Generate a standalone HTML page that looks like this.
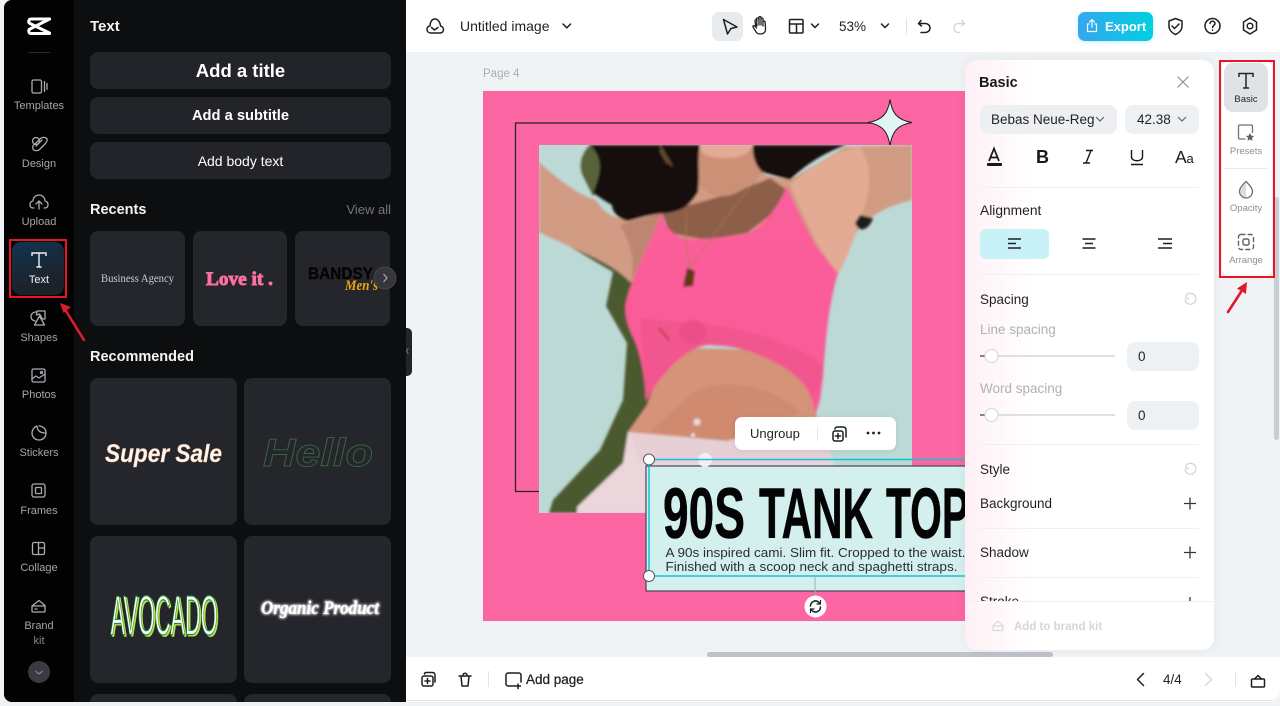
<!DOCTYPE html>
<html><head><meta charset="utf-8"><title>Untitled image</title>
<style>
*{box-sizing:border-box}
html,body{margin:0;padding:0;width:1280px;height:706px;overflow:hidden;background:#f1f2f3;font-family:"Liberation Sans",sans-serif}
.a{position:absolute;white-space:nowrap}
.c{text-align:center}
#app{position:absolute;left:0;top:0;width:1280px;height:706px;overflow:hidden;filter:blur(.3px)}
svg{position:absolute;left:0;top:0;overflow:visible}
.lab{left:4px;width:70px;text-align:center;font-size:11px;color:#a4a6aa;line-height:14px;position:absolute;white-space:nowrap}
.btn{position:absolute;left:90px;width:301px;height:37px;background:#232429;border-radius:8px;color:#fff;text-align:center;line-height:38px}
.card{position:absolute;background:#25262b;border-radius:8px}
.h{font-weight:bold;color:#f4f4f4;font-size:14.5px;position:absolute;white-space:nowrap}
.t{position:absolute;white-space:nowrap;font-size:13.5px;color:#1f2126;line-height:18px}
.dv{position:absolute;left:980px;width:219px;height:1px;background:#eff0f2}
.inp{position:absolute;left:1127px;width:72px;height:29px;background:#eef1f3;border-radius:8px;font-size:13.5px;line-height:29px;padding-left:11px;color:#22242a}
.sl{fill:none;stroke:#1d1f24;stroke-width:1.5;stroke-linecap:round;stroke-linejoin:round}
.ic{fill:none;stroke:#a9abb0;stroke-width:1.3;stroke-linecap:round;stroke-linejoin:round}
</style></head><body><div id="app">

<!-- white main -->
<div class="a" style="left:400px;top:0;width:880px;height:702px;background:#fff;border-radius:0 0 10px 0"></div>
<div class="a" style="left:406px;top:52px;width:874px;height:605px;background:#f0f3f5"></div>

<!-- left rail + panel -->
<div class="a" style="left:4px;top:0;width:402px;height:702px;background:#0d0e10;border-radius:8px 0 0 8px"></div>
<div class="a" style="left:4px;top:0;width:70px;height:702px;background:#020203;border-radius:8px 0 0 8px"></div>
<div class="a" style="left:406px;top:328px;width:6px;height:48px;background:#222428;border-radius:0 5px 5px 0"></div>
<div class="a" style="left:12px;top:242px;width:52px;height:53px;background:linear-gradient(160deg,#123452,#1c2229 75%);border-radius:9px"></div>

<div class="lab" style="top:99px">Templates</div>
<div class="lab" style="top:157px">Design</div>
<div class="lab" style="top:215px">Upload</div>
<div class="lab" style="top:273px;color:#f1f1f1">Text</div>
<div class="lab" style="top:331px">Shapes</div>
<div class="lab" style="top:388px">Photos</div>
<div class="lab" style="top:446px">Stickers</div>
<div class="lab" style="top:504px">Frames</div>
<div class="lab" style="top:561px">Collage</div>
<div class="lab" style="top:619px">Brand</div>
<div class="lab" style="top:634px;color:#85878b">kit</div>

<svg width="1280" height="706" style="z-index:2">
  <!-- logo -->
  <g fill="none" stroke="#fff" stroke-width="3" stroke-linejoin="round" stroke-linecap="round"><path d="M49.500 19H31c-2.500 0-3 3.500-1 4.500L49.500 33"/><path d="M49.500 33.500H31c-2.500 0-3-3.500-1-4.500L49.500 19"/></g>
  <rect x="28" y="52" width="22" height="1" fill="#2b2c30"/>
  <!-- templates -->
  <g class="ic"><rect x="32" y="80" width="9.500" height="13" rx="1.500"/><path d="M44.500 81.500v10M47 83.500v6"/></g>
  <!-- design -->
  <g class="ic"><circle cx="36" cy="141" r="3.500"/><path d="M40 139c2-2 4-2 6-1s1 4-1 6l-6 6c-2 1-5 1-6-1s0-4 2-5z"/><path d="M36 146l6-6"/></g>
  <!-- upload -->
  <g class="ic"><path d="M34 208h-1c-2.500 0-3-2-3-3.500s1-3.500 3-3.500c0-3.500 3-6 6-6s6 2.500 6 6c2 0 3 2 3 3.500s-.5 3.500-3 3.500h-1"/><path d="M39 209v-7M36 204l3-3 3 3"/></g>
  <!-- T active -->
  <g fill="none" stroke="#eef1f4" stroke-width="1.400"><path d="M32 256v-3h14v3M39 253v14M36.500 267h5"/></g>
  <!-- shapes -->
  <g class="ic"><path d="M36 312c-3 0-5 2-5 4.500s2 4 4 4.500"/><path d="M37 311h8v8h-2.500l-3-5-3 1z"/><path d="M39.500 316l5 9h-10z"/></g>
  <!-- photos -->
  <g class="ic"><rect x="32" y="369" width="13" height="13" rx="1.500"/><path d="M32 379l4-3 3 2 6-4"/><circle cx="41.500" cy="372.500" r="1"/></g>
  <!-- stickers -->
  <g class="ic"><path d="M39 426c4 0 7 3 7 7s-3 7-7 7-7-3-7-7c0-3 2-6 5-7 0 4 3 7 8 7"/></g>
  <!-- frames -->
  <g class="ic"><rect x="32" y="484" width="13" height="13" rx="2"/><rect x="35.500" y="487.500" width="6" height="6" rx="1"/></g>
  <!-- collage -->
  <g class="ic"><rect x="32.500" y="542.500" width="12" height="12" rx="1.500"/><path d="M38.500 542.500v12M38.500 548h6"/></g>
  <!-- brand -->
  <g class="ic"><path d="M32 606l7-5.500 6 5M32 606h13v5a1 1 0 0 1-1 1H33a1 1 0 0 1-1-1zM35 609h2"/></g>
  <circle cx="39" cy="672" r="11" fill="#3a3b42"/><path d="M35.500 671l3.500 3 3.500-3" fill="none" stroke="#84868c" stroke-width="1.200"/>
  <path d="M408.500 348l-2 3 2 3" fill="none" stroke="#777" stroke-width="1"/>
</svg>

<div class="h" style="left:90px;top:18px;font-size:15px">Text</div>
<div class="btn" style="top:52px;font-size:18.500px;font-weight:bold">Add a title</div>
<div class="btn" style="top:97px;font-size:14.700px;font-weight:bold">Add a subtitle</div>
<div class="btn" style="top:142px;font-size:14px">Add body text</div>
<div class="h" style="left:90px;top:202px">Recents</div>
<div class="a" style="right:889px;top:202px;font-size:13px;color:#74767b">View all</div>
<div class="card" style="left:90px;top:231px;width:95px;height:95px"></div>
<div class="card" style="left:193px;top:231px;width:94px;height:95px"></div>
<div class="card" style="left:295px;top:231px;width:95px;height:95px"></div>
<div class="h" style="left:90px;top:349px">Recommended</div>
<div class="card" style="left:90px;top:378px;width:147px;height:147px"></div>
<div class="card" style="left:244px;top:378px;width:147px;height:147px"></div>
<div class="card" style="left:90px;top:536px;width:147px;height:147px"></div>
<div class="card" style="left:244px;top:536px;width:147px;height:147px"></div>
<div class="card" style="left:90px;top:694px;width:147px;height:8px;border-radius:8px 8px 0 0"></div>
<div class="card" style="left:244px;top:694px;width:147px;height:8px;border-radius:8px 8px 0 0"></div>

<svg width="1280" height="706" style="z-index:2">
  <defs><filter id="gl" x="-20%" y="-50%" width="140%" height="200%"><feGaussianBlur stdDeviation="1.300"/></filter></defs>
  <text x="101" y="282" font-family="Liberation Serif" font-size="11.500" fill="#c9ccd3" textLength="73" lengthAdjust="spacingAndGlyphs">Business Agency</text>
  <text x="206" y="285" font-family="Liberation Serif" font-weight="bold" font-size="19" fill="#ff6f9f" stroke="#ff6f9f" stroke-width=".9" textLength="67" lengthAdjust="spacingAndGlyphs">Love it .</text>
  <text x="308" y="279" font-size="17" font-weight="bold" fill="#050505" stroke="#050505" stroke-width=".4" textLength="65" lengthAdjust="spacingAndGlyphs">BANDSY</text>
  <text x="345" y="290" font-family="Liberation Serif" font-style="italic" font-weight="bold" font-size="15" fill="#eda70c" textLength="33" lengthAdjust="spacingAndGlyphs">Men's</text>
  <circle cx="385" cy="278" r="11" fill="#35363b" stroke="#45464b"/><path d="M383.500 274l3.500 4-3.500 4" fill="none" stroke="#a7a8ac" stroke-width="1.200"/>

  <text x="105" y="462" font-weight="bold" font-style="italic" font-size="25" fill="#fff6ec" stroke="#e9b79b" stroke-width=".4" textLength="117" lengthAdjust="spacingAndGlyphs">Super Sale</text>
  <text x="263" y="466" font-weight="bold" font-style="italic" font-size="39" fill="none" stroke="#3a6340" stroke-width=".9" textLength="110" lengthAdjust="spacingAndGlyphs">Hello</text>
  <text x="112" y="636" font-size="56" fill="#b9e14a" stroke="#b9e14a" stroke-width="1" textLength="107" lengthAdjust="spacingAndGlyphs">AVOCADO</text>
  <text x="110.500" y="634.500" font-size="56" fill="#fff" stroke="#188a35" stroke-width="1.200" textLength="107" lengthAdjust="spacingAndGlyphs">AVOCADO</text>
  <text x="261" y="614" font-family="Liberation Serif" font-style="italic" font-weight="bold" font-size="18.500" fill="#fff" filter="url(#gl)" stroke="#fff" stroke-width="1.200" textLength="118" lengthAdjust="spacingAndGlyphs">Organic Product</text>
  <text x="261" y="614" font-family="Liberation Serif" font-style="italic" font-weight="bold" font-size="18.500" fill="#fff" textLength="118" lengthAdjust="spacingAndGlyphs">Organic Product</text>
</svg>

<!-- canvas -->
<div class="a" style="left:483px;top:68px;font-size:11.500px;color:#a8aeb5">Page 4</div>
<svg width="1280" height="706" viewBox="0 0 1280 706">
  <defs>
    <clipPath id="ph"><rect x="539" y="145" width="373" height="368"/></clipPath>
    <filter id="b1" x="-5%" y="-5%" width="110%" height="110%"><feGaussianBlur stdDeviation="1.200"/></filter>
    <linearGradient id="tp" x1="0" y1="0" x2="0" y2="1"><stop offset="0" stop-color="#fb5f9b"/><stop offset="1" stop-color="#f85a96"/></linearGradient>
  </defs>
  <rect x="483" y="91" width="482" height="530" fill="#fb66a3"/>
  <path d="M515.500 491.500V123H880" fill="none" stroke="#23222a" stroke-width="1.300"/>
  <path d="M515 491.500H545" fill="none" stroke="#23222a" stroke-width="1.300"/>
  <path d="M890 99.500C892 113 897 120 912 122.500 897 125 892 132 890 146 888 132 883 125 868 122.500 883 120 888 113 890 99.500Z" fill="#dff6f2" stroke="#1a1c20" stroke-width="1"/>
  <g clip-path="url(#ph)">
    <rect x="539" y="145" width="373" height="368" fill="#bcd9d6"/>
    <g filter="url(#b1)">
      <!-- green shadow -->
      <path d="M539 228L613 272 606 306 627 343 623 400 600 450 553 500 549 513H640L670 430 670 300 640 260 570 215Z" fill="#4b5a2e"/>
      <path d="M590 145C580 155 578 168 584 178L593 196 610 180 620 145Z" fill="#59623a"/>
      <!-- pants -->
      <path d="M628 432L623 463 577 507V513H680V466H835L825 440 790 428 727 441Z" fill="#ead6db"/>
      <path d="M628 432L727 441 790 428 828 445 833 462H640Z" fill="#e6d0d6"/>
      <!-- left arm + shoulders + neck + right arm skin -->
      <path d="M539 162C556 178 578 195 596 200 605 215 620 225 650 215L680 210 697 190 697 145H755L765 175 790 180 845 147 912 145V200C880 208 862 220 852 240L838 275 700 320 650 280 630 282C612 262 575 250 539 232Z" fill="#d19b84"/>
      <path d="M790 185C810 168 830 152 860 147 872 165 872 185 862 215 852 245 846 260 838 275L815 240Z" fill="#e3ab93"/>
      <path d="M620 225C632 245 636 265 630 282 640 265 650 240 662 213Z" fill="#bd8670"/>
      <path d="M662 213C680 206 720 200 770 178L787 190 773 213 747 233 707 240 670 233Z" fill="#8d5e49"/>
      <path d="M697 180C710 205 740 200 762 172L755 145H697Z" fill="#cc9076"/>
      <path d="M697 145H753C748 155 740 158 725 158S702 155 697 145Z" fill="#e3ab97"/>
      <!-- hair -->
      <path d="M590 145H700C697 160 700 175 698 192 690 205 684 210 668 213 650 214 640 218 628 221 620 220 612 212 612 205 603 200 598 196 593 193 600 175 605 160 590 145Z" fill="#150e0f"/>
      <path d="M753 145H847C830 150 808 162 790 180L762 172C755 165 752 155 753 145Z" fill="#160f10"/>
      <path d="M855 223C860 235 870 228 873 218L860 215Z" fill="#1e1a1b"/>
      <!-- belly -->
      <path d="M647 405C655 380 668 358 690 348L760 350 812 385 817 418 727 441 628 432 640 415Z" fill="#d59379"/>
      <path d="M690 395C720 375 770 385 800 412L727 441 650 432Z" fill="#cf8a70"/>
      <!-- top -->
      <path d="M662 213C664 225 670 232 680 237 695 241 720 238 745 234 762 228 778 208 787 186 795 205 805 225 813 240 822 255 832 265 838 273 830 300 826 330 823 377L820 400 815 415 812 400C806 380 785 366 763 357 745 348 725 345 707 345 685 348 660 375 646 401 645 375 640 350 632 335 625 320 624 308 627 298 635 270 650 240 662 213Z" fill="url(#tp)"/>
      <path d="M640 318C680 322 730 325 760 335 790 345 810 355 823 365L822 380 812 400C806 380 785 366 763 357 745 348 725 345 707 345 685 348 660 375 646 401 645 375 642 340 640 318Z" fill="#f2568e"/>
      <ellipse cx="693" cy="332" rx="14" ry="12" fill="#ec4f88"/>
      <path d="M659 328l10 12" stroke="#b93a3a" stroke-width="2" fill="none"/>
      <!-- necklace -->
      <path d="M686 210C686 235 686 250 690 268M756 180C735 205 710 240 690 268" stroke="#a37a3c" stroke-width=".8" fill="none"/>
      <path d="M687 268l8 3-2 15-10 1z" fill="#5e3a10"/>
      <circle cx="697" cy="422" r="3.500" fill="#e7dedc"/><circle cx="693" cy="435" r="1.800" fill="#eee"/>
      <path d="M660 150l8 14M660 146l12 20" stroke="#a88149" stroke-width="1.300" opacity=".7"/>
    </g>
  </g>

  <!-- text box -->
  <rect x="646" y="466" width="330" height="125" fill="#d4f0ee" stroke="#45474b" stroke-width="1.200"/>
  <g font-size="71" font-weight="bold" fill="#040404" stroke="#040404" stroke-width=".6">
    <text x="663" y="538" textLength="82" lengthAdjust="spacingAndGlyphs">90S</text>
    <text x="759" y="538" textLength="114" lengthAdjust="spacingAndGlyphs">TANK</text>
    <text x="886" y="538" textLength="83" lengthAdjust="spacingAndGlyphs">TOP</text>
  </g>
  <text x="665.500" y="557" font-size="13" fill="#2a2d30" textLength="300" lengthAdjust="spacingAndGlyphs">A 90s inspired cami. Slim fit. Cropped to the waist.</text>
  <text x="665.500" y="571" font-size="13" fill="#2a2d30" textLength="292" lengthAdjust="spacingAndGlyphs">Finished with a scoop neck and spaghetti straps.</text>
  <circle cx="705" cy="460" r="7" fill="#f5eef0"/>
  <path d="M649 459.500H966M649 576H966M649 459V576" fill="none" stroke="#10c4da" stroke-width="1.500"/>
  <path d="M815 577V596" stroke="#9eb0b2" stroke-width="1"/>
  <circle cx="649" cy="459.500" r="5.500" fill="#fff" stroke="#55585c"/>
  <circle cx="649" cy="576" r="5.500" fill="#fff" stroke="#55585c"/>
  <circle cx="815.500" cy="606.500" r="11" fill="#fff"/>
  <g fill="none" stroke="#1d1f24" stroke-width="1.500" stroke-linecap="round" stroke-linejoin="round"><path d="M810.500 606a5 5 0 0 1 8-4l1.500 1.500M820.500 607a5 5 0 0 1-8 4l-1.500-1.500"/><path d="M820.500 600.500v3.500h-3.500M810.500 612.500V609h3.500" stroke-width="1.200"/></g>
</svg>

<!-- ungroup -->
<div class="a" style="left:735px;top:417px;width:161px;height:33px;background:#fff;border-radius:7px;box-shadow:0 1px 6px rgba(0,0,0,.08)"></div>
<div class="a" style="left:750px;top:426px;font-size:13px;color:#1f2126;line-height:16px">Ungroup</div>
<div class="a" style="left:817px;top:427px;width:1px;height:14px;background:#e2e4e6"></div>

<!-- horiz scrollbar -->
<div class="a" style="left:707px;top:652px;width:346px;height:5px;background:#bfc3c7;border-radius:3px"></div>
<!-- vert scrollbar -->
<div class="a" style="left:1274px;top:197px;width:5px;height:243px;background:#c9ced2;border-radius:3px"></div>

<!-- top bar -->
<div class="a" style="left:406px;top:0;width:874px;height:52px;background:#fff;border-radius:0 10px 0 0"></div>
<div class="a" style="left:460px;top:17px;font-size:14px;color:#1f2126;line-height:18px">Untitled image</div>
<div class="a" style="left:712px;top:12px;width:31px;height:29px;background:#e7ebee;border-radius:7px"></div>
<div class="a" style="left:839px;top:18px;font-size:13.500px;color:#1f2126;line-height:18px">53%</div>
<div class="a" style="left:906px;top:18px;width:1px;height:16px;background:#e2e5e8"></div>
<div class="a" style="left:1078px;top:12px;width:75px;height:29px;background:linear-gradient(90deg,#35a6f1,#01cfe0);border-radius:7px;box-shadow:0 1px 4px rgba(0,190,230,.25)"></div>
<div class="a" style="left:1105px;top:18px;font-size:13px;font-weight:bold;color:#fff;line-height:18px">Export</div>

<!-- bottom bar -->
<div class="a" style="left:406px;top:657px;width:874px;height:44px;background:#fff;border-bottom:1.500px solid #e4e6e8;border-radius:0 0 10px 0"></div>
<div class="a" style="left:488px;top:671px;width:1px;height:16px;background:#e2e5e8"></div>
<div class="a" style="left:526px;top:671px;font-size:13.500px;color:#1f2126;font-weight:500;line-height:18px;-webkit-text-stroke:.25px #1f2126">Add page</div>
<div class="a" style="left:1163px;top:671px;font-size:13.500px;color:#1f2126;line-height:18px">4/4</div>
<div class="a" style="left:1235px;top:671px;width:1px;height:15px;background:#e2e5e8"></div>

<!-- right panel -->
<div class="a" style="left:965px;top:60px;width:249px;height:590px;background:linear-gradient(90deg,#fff0f6,#fff 27%);border-radius:12px;box-shadow:0 0 12px rgba(0,0,0,.05)"></div>
<div class="a" style="left:979px;top:74px;font-size:14.500px;font-weight:bold;color:#16181d;line-height:18px">Basic</div>
<div class="a" style="left:980px;top:105px;width:137px;height:29px;background:#eeeff3;border-radius:8px"></div>
<div class="t" style="left:991px;top:111px;width:104px;overflow:hidden">Bebas Neue-Regular</div>
<div class="a" style="left:1125px;top:105px;width:74px;height:29px;background:#eef1f4;border-radius:8px"></div>
<div class="t" style="left:1137px;top:111px">42.38</div>
<div class="dv" style="top:187px"></div>
<div class="t" style="left:980px;top:202px;font-size:13.800px">Alignment</div>
<div class="a" style="left:980px;top:229px;width:69px;height:30px;background:#c8f2f7;border-radius:6px"></div>
<div class="dv" style="top:274px"></div>
<div class="t" style="left:980px;top:291px">Spacing</div>
<div class="t" style="left:980px;top:321px;color:#aeb1b8">Line spacing</div>
<div class="inp" style="top:342px">0</div>
<div class="t" style="left:980px;top:380px;color:#aeb1b8">Word spacing</div>
<div class="inp" style="top:401px">0</div>
<div class="dv" style="top:444px"></div>
<div class="t" style="left:980px;top:461px">Style</div>
<div class="t" style="left:980px;top:495px">Background</div>
<div class="dv" style="top:528px"></div>
<div class="t" style="left:980px;top:544px">Shadow</div>
<div class="dv" style="top:577px"></div>
<div class="a" style="left:965px;top:593px;width:249px;height:8px;overflow:hidden"><div class="t" style="left:15px;top:0">Stroke</div></div>
<div class="a" style="left:965px;top:601px;width:249px;height:1px;background:#eff0f2"></div>
<div class="t" style="left:1014px;top:618px;font-size:11.500px;color:#d3d6dc;font-weight:bold">Add to brand kit</div>

<!-- right strip -->
<div class="a" style="left:1222px;top:60px;width:50px;height:216px;background:#fff;border-radius:8px"></div>
<div class="a" style="left:1224px;top:63px;width:44px;height:49px;background:#dfe3e6;border-radius:9px"></div>
<div class="a c" style="left:1222px;width:48px;top:94px;font-size:9.500px;color:#22242a;line-height:12px">Basic</div>
<div class="a c" style="left:1222px;width:48px;top:146px;font-size:9.500px;color:#8b8e94;line-height:12px">Presets</div>
<div class="a" style="left:1224px;top:168px;width:44px;height:1px;background:#e9ebed"></div>
<div class="a c" style="left:1222px;width:48px;top:203px;font-size:9.500px;color:#8b8e94;line-height:12px">Opacity</div>
<div class="a c" style="left:1222px;width:48px;top:255px;font-size:9.500px;color:#8b8e94;line-height:12px">Arrange</div>

<svg width="1280" height="706" style="z-index:3">
  <!-- top bar icons -->
  <g class="sl"><path d="M431 33h9c2.500 0 3.500-2 3.500-3.500S442 26 440.500 26c0-2.500-2-7-5.500-7s-5 3.500-5 7c-2 0-3 1.500-3 3.500s1.500 3.500 4 3.500z"/><path d="M431.500 27.500l3 2.500 3.500-2.500"/></g>
  <g class="sl"><path d="M563 24l3.800 3.800 3.800-3.800M811.500 24l3.500 3.500 3.500-3.500M881.500 24l3.500 3.500 3.500-3.500"/></g>
  <path class="sl" d="M723.500 19.500l13.500 7.500-6 1.500-3.500 5.500z" />
  <g class="sl"><path d="M756 27l-1-6a1 1 0 0 1 2-.5M757 26l-.5-7a1 1 0 0 1 2 0M759 25v-7.500a1 1 0 0 1 2 0V25M761 25v-6a1 1 0 0 1 2 0v7M763 25l0-3a1 1 0 0 1 2 0c.5 3 .5 6 .500 8 0 2-2 4-5 4-3 0-4-1-5-3l-2.500-4c-.5-1 1-2 2-1l1.500 2" stroke-width="1.300"/></g>
  <g class="sl"><rect x="789.500" y="19.500" width="13.500" height="13.500" rx="1"/><path d="M789.500 24h13.500M796.500 24v9"/></g>
  <g class="sl"><path d="M921 20.500l-2.500 3 3 2.500M919 23.500h6c3 0 5 2 5 4.500s-2 4.500-5 4.500h-4"/></g>
  <g fill="none" stroke="#d4d9de" stroke-width="1.500" stroke-linecap="round" stroke-linejoin="round"><path d="M962 20.500l2.500 3-3 2.500M964 23.500h-6c-2.500 0-4 2-4 4.500s1.500 4.500 4 4.500h1"/></g>
  <g fill="none" stroke="#fff" stroke-width="1.200" stroke-linecap="round" stroke-linejoin="round"><path d="M1089 24h-1.500v7.500h9V24H1095M1092 27v-7M1089.500 22l2.500-2.500 2.500 2.500"/></g>
  <g class="sl"><path d="M1175.500 18.500l6.500 2.500v5c0 4-3 7-6.500 8.500-3.500-1.500-6.500-4.500-6.500-8.500v-5z"/><path d="M1172 26l2.500 2.500 4.500-4.500"/></g>
  <g class="sl"><circle cx="1212.500" cy="26" r="7.500"/><path d="M1210 23.500c0-3 5-3 5 0 0 2-2.500 2-2.500 4"/><path d="M1212.500 30v.1"/></g>
  <g class="sl"><path d="M1250 18l6.500 4v8l-6.500 4-6.500-4v-8z"/><circle cx="1250" cy="26" r="2.800"/></g>

  <!-- ungroup icons -->
  <g class="sl"><rect x="833" y="431" width="10" height="10" rx="2"/><path d="M835 429c0-1 1-2 2-2h6c2 0 3 1 3 3v7M838 433.500v5M835.500 436h5"/></g>
  <g fill="#1d1f24"><circle cx="868" cy="433" r="1.400"/><circle cx="873.500" cy="433" r="1.400"/><circle cx="879" cy="433" r="1.400"/></g>

  <!-- bottom icons -->
  <g class="sl"><rect x="422" y="676" width="11" height="10" rx="2"/><path d="M424.500 674c0-1 1-1.500 2-1.500h6c1.500 0 2.500 1 2.500 2.500v7M427.500 678.500v5M425 681h5"/></g>
  <g class="sl"><path d="M459 676h12M461 676l1 10h6l1-10M463 675.500c0-3 4-3 4 0"/></g>
  <g class="sl"><path d="M516 686h-8c-1 0-2-1-2-2v-9c0-1 1-2 2-2h11c1 0 2 1 2 2v7M518 684v4.500M515.500 686h5"/></g>
  <path class="sl" d="M1143.500 673.500l-6 6 6 6"/>
  <path d="M1205.500 673.500l6 6-6 6" fill="none" stroke="#d3d7dc" stroke-width="1.500" stroke-linecap="round" stroke-linejoin="round"/>
  <g class="sl"><rect x="1251.500" y="679" width="13" height="8" rx="1"/><path d="M1254.500 679l3.500-3.500 3.500 3.500"/></g>

  <!-- panel icons -->
  <path d="M1177.500 76.500l11 11M1188.500 76.500l-11 11" fill="none" stroke="#8f9298" stroke-width="1.200"/>
  <path d="M1096 117l4 4 4-4M1178 117l4 4 4-4" fill="none" stroke="#62656b" stroke-width="1.200"/>
  <!-- format -->
  <path d="M989 161l5-12.500 5 12.500M990.500 157.500h7" fill="none" stroke="#16181d" stroke-width="1.700"/>
  <rect x="987" y="163" width="15" height="3" rx="1" fill="#16181d"/>
  <text x="1036" y="163" font-size="18" font-weight="bold" fill="#16181d">B</text>
  <path d="M1086 150.500h7M1083 163h7M1091 150.500l-5 12.500" fill="none" stroke="#16181d" stroke-width="1.400"/>
  <path d="M1131.500 150v7c0 5 11 5 11 0v-7M1131 164.500h12" fill="none" stroke="#16181d" stroke-width="1.400"/>
  <text x="1175" y="163" font-size="17.500" fill="#16181d">A</text><text x="1186.500" y="163" font-size="13" fill="#16181d">a</text>
  <!-- align -->
  <g stroke="#1d1f24" stroke-width="1.500" fill="none">
    <path d="M1008 239h13M1008 243.500h8M1008 248h13"/>
    <path d="M1082.500 239h13M1085 243.500h8M1082.500 248h13"/>
    <path d="M1158 239h14M1163 243.500h9M1158 248h14"/>
  </g>
  <!-- reset -->
  <g fill="none" stroke="#d1d3d7" stroke-width="1.200"><path d="M1186 295.500a5.500 5.500 0 1 1-1 4M1186 295.500v3h3"/><path d="M1186 465.500a5.500 5.500 0 1 1-1 4M1186 465.500v3h3"/></g>
  <!-- sliders -->
  <path d="M980 356h135M980 415h135" stroke="#d2d6dc" stroke-width="1.500"/>
  <path d="M980 356h6M980 415h6" stroke="#5f6268" stroke-width="1.500"/>
  <circle cx="991.500" cy="356" r="6.500" fill="#fff" stroke="#d2d5da"/>
  <circle cx="991.500" cy="415" r="6.500" fill="#fff" stroke="#d2d5da"/>
  <!-- plus -->
  <path d="M1184 503.500h12M1190 497.500v12M1184 552.500h12M1190 546.500v12" stroke="#33353a" stroke-width="1.300"/>
  <path d="M1190 597v4" stroke="#33353a" stroke-width="1.300"/>
  <!-- brand -->
  <g fill="none" stroke="#d6d9de" stroke-width="1.200" stroke-linejoin="round"><path d="M993 626l5-5 5 5M993 626h10v4.500h-10z"/></g>
  <!-- strip icons -->
  <g fill="none" stroke="#24262b" stroke-width="1.500"><path d="M1239 77v-3.500h14V77M1246 73.500v14.500M1243 88h6"/></g>
  <g class="ic" style="stroke:#6d7076"><path d="M1245 139h-5c-1 0-1.500-.5-1.500-1.500v-11c0-1 .5-1.500 1.500-1.500h11c1 0 1.500.5 1.500 1.500v6"/></g>
  <path d="M1250 133l1.300 2.600 2.700.4-2 2 .5 2.800-2.500-1.300-2.500 1.300.5-2.800-2-2 2.700-.4z" fill="#5f6268"/>
  <g class="ic" style="stroke:#6d7076"><path d="M1246 181.500c3 3 6.500 6.500 6.500 10s-3 6.500-6.500 6.500-6.500-3-6.500-6.500 3.500-7 6.500-10z"/></g>
  <path d="M1246 183v14.500c-3.500 0-5.500-3-5.500-6 0-3 3.500-6 5.500-8.500z" fill="#6d7076" opacity=".25"/>
  <g fill="none" stroke="#5f6268" stroke-width="1.400" stroke-linecap="round" stroke-dasharray="4 3.200"><rect x="1238.500" y="234.500" width="15" height="15" rx="2.500"/></g>
  <rect x="1243" y="239" width="6" height="6" rx="1.500" fill="none" stroke="#5f6268" stroke-width="1.400"/>

  <!-- red highlights -->
  <rect x="10" y="240" width="56" height="57" fill="none" stroke="#ee1225" stroke-width="2"/>
  <rect x="1220" y="61" width="54" height="216" fill="none" stroke="#ee1225" stroke-width="2"/>
  <path d="M84 340L66 311" stroke="#e01a2b" stroke-width="2.600" stroke-linecap="round"/>
  <path d="M60 303l11 4-7.500 6z" fill="#e01a2b"/>
  <path d="M1228 312L1241 292" stroke="#e01a2b" stroke-width="2.600" stroke-linecap="round"/>
  <path d="M1247 282l-1 12-9-5.500z" fill="#e01a2b"/>
</svg>
</div></body></html>
